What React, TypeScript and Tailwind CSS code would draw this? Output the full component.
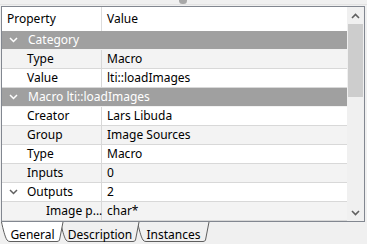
import React from "react";

type Row =
  | { kind: "band"; label: string }
  | { kind: "item"; name: string; value: string; indent: number; expander?: boolean };

const rows: Row[] = [
  { kind: "band", label: "Category" },
  { kind: "item", name: "Type", value: "Macro", indent: 25 },
  { kind: "item", name: "Value", value: "lti::loadImages", indent: 25 },
  { kind: "band", label: "Macro lti::loadImages" },
  { kind: "item", name: "Creator", value: "Lars Libuda", indent: 25 },
  { kind: "item", name: "Group", value: "Image Sources", indent: 25 },
  { kind: "item", name: "Type", value: "Macro", indent: 25 },
  { kind: "item", name: "Inputs", value: "0", indent: 25 },
  { kind: "item", name: "Outputs", value: "2", indent: 25, expander: true },
  { kind: "item", name: "Image p...", value: "char*", indent: 44 },
];

const Chevron = ({ color }: { color: string }) => (
  <svg width="9" height="6" viewBox="0 0 9 6" className="shrink-0">
    <path d="M1 1 L4.5 4.5 L8 1" fill="none" stroke={color} strokeWidth="1.5" />
  </svg>
);

const TabShape = ({ w, fill, stroke }: { w: number; fill: string; stroke: string }) => (
  <svg width={w} height="21" viewBox={`0 0 ${w} 21`} className="absolute left-0 top-0">
    <path
      d={`M0.5 0 C2 7 4 15 6 18 Q7 19.5 9 19.5 L${w - 10} 19.5 Q${w - 8} 19.5 ${w - 7.5} 18 L${w - 4} 0`}
      fill={fill}
      stroke={stroke}
      strokeWidth="1"
    />
  </svg>
);

const Tab = ({ label, w, active, z }: { label: string; w: number; active?: boolean; z: string }) => (
  <div className={`relative h-[21px] flex justify-center ${z}`} style={{ width: w }}>
    <TabShape w={w} fill={active ? "#ffffff" : "#f0f0f0"} stroke="#5f5f5f" />
    <span className="relative pr-[3px] pt-[7px] text-[12px] leading-none text-black whitespace-nowrap">{label}</span>
  </div>
);

export default function App() {
  let alt = 0;
  return (
    <div className="relative w-[367px] h-[244px] overflow-hidden bg-[#f0f0f0] font-['Noto_Sans','Liberation_Sans',sans-serif] text-[12px] leading-none text-black">
      {/* splitter handle */}
      <div className="absolute left-[179px] top-[-3px] w-[8px] h-[7px] rounded-full bg-[#a8a8a8]" />
      <div className="h-[5px] border-b border-[#e3e3e3]" />

      {/* property frame */}
      <div className="ml-[1px] mt-[1px] w-[364px] h-[216px] border border-[#828790] flex bg-white">
        <div className="flex-1 flex flex-col">
          {/* header */}
          <div className="h-[24px] flex bg-white">
            <div className="w-[100px] border-r border-[#dcdcdc] flex items-center pl-[5px]">Property</div>
            <div className="flex-1 flex items-center pl-[5px]">Value</div>
          </div>
          {rows.map((r, i) => {
            if (r.kind === "band") {
              alt++;
              return (
                <div key={i} className="h-[19px] flex items-center bg-[#a0a0a0] text-white border-b border-[#f2f2f2] pl-[7px] gap-[10px] whitespace-nowrap">
                  <Chevron color="#ffffff" />
                  <span>{r.label}</span>
                </div>
              );
            }
            const shade = alt % 2 === 1 ? "bg-[#f3f3f3]" : "bg-white";
            alt++;
            return (
              <div key={i} className={`h-[19px] flex border-b border-[#d8d8d8] ${shade}`}>
                <div className="w-[100px] shrink-0 border-r border-[#d8d8d8] flex items-center relative whitespace-nowrap">
                  {r.expander && (
                    <span className="absolute left-[7px] top-[6px]">
                      <Chevron color="#606060" />
                    </span>
                  )}
                  <span style={{ paddingLeft: r.indent }}>{r.name}</span>
                </div>
                <div className="flex-1 flex items-center pl-[5px] whitespace-nowrap">{r.value}</div>
              </div>
            );
          })}
        </div>

        {/* scrollbar */}
        <div className="w-[17px] bg-[#f0f0f0] flex flex-col items-center">
          <div className="h-[17px] flex items-center justify-center">
            <svg width="9" height="6" viewBox="0 0 9 6">
              <path d="M1 5 L4.5 1.5 L8 5" fill="none" stroke="#606060" strokeWidth="1.6" />
            </svg>
          </div>
          <div className="w-[15px] h-[73px] bg-[#cdcdcd]" />
          <div className="flex-1" />
          <div className="h-[17px] flex items-center justify-center">
            <svg width="9" height="6" viewBox="0 0 9 6">
              <path d="M1 1 L4.5 4.5 L8 1" fill="none" stroke="#606060" strokeWidth="1.6" />
            </svg>
          </div>
        </div>
      </div>

      {/* tab bar */}
      <div className="flex pl-[1px]">
        <Tab label="General" w={66} active z="z-30" />
        <Tab label="Description" w={83} z="z-20 -ml-[7px]" />
        <Tab label="Instances" w={76} z="z-10 -ml-[6px]" />
      </div>
    </div>
  );
}
